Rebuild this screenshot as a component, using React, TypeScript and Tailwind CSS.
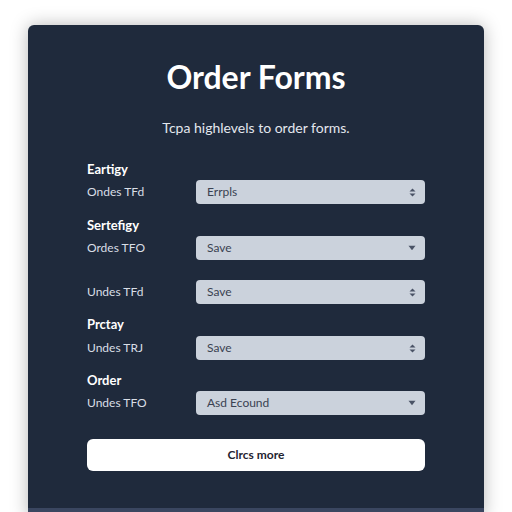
const rows: (
  | { kind: "heading"; text: string; mt: string }
  | { kind: "row"; label: string; value: string; icon: "updown" | "down"; mt: string }
)[] = [
  { kind: "heading", text: "Eartigy", mt: "mt-0" },
  { kind: "row", label: "Ondes TFd", value: "Errpls", icon: "updown", mt: "mt-[3px]" },
  { kind: "heading", text: "Sertefigy", mt: "mt-[13px]" },
  { kind: "row", label: "Ordes TFO", value: "Save", icon: "down", mt: "mt-[3px]" },
  { kind: "row", label: "Undes TFd", value: "Save", icon: "updown", mt: "mt-[20px]" },
  { kind: "heading", text: "Prctay", mt: "mt-[12px]" },
  { kind: "row", label: "Undes TRJ", value: "Save", icon: "updown", mt: "mt-[4px]" },
  { kind: "heading", text: "Order", mt: "mt-[12px]" },
  { kind: "row", label: "Undes TFO", value: "Asd Ecound", icon: "down", mt: "mt-[3px]" },
];

function SelectIcon({ icon }: { icon: "updown" | "down" }) {
  if (icon === "down") {
    return (
      <svg width="8" height="6" viewBox="0 0 8 6" className="text-[#4a5366]">
        <path d="M0.5 0.8 L7.5 0.8 L4 5.2 Z" fill="currentColor" />
      </svg>
    );
  }
  return (
    <svg width="7" height="9" viewBox="0 0 7 9" className="text-[#4a5366]">
      <path d="M3.5 0.5 L6.5 3.6 L0.5 3.6 Z" fill="currentColor" />
      <path d="M3.5 8.5 L6.5 5.4 L0.5 5.4 Z" fill="currentColor" />
    </svg>
  );
}

export default function App() {
  return (
    <div className="min-h-[512px] bg-white font-['Lato',sans-serif]">
      <div className="mx-auto mt-[25px] w-[456px] overflow-hidden rounded-t-md bg-[#1f2a3c] shadow-[0_0_18px_rgba(0,0,0,0.28)]">
        <div className="px-[59px] pb-[37px] pt-[34px]">
          <h1 className="text-center text-[32px] font-bold leading-[36px] text-white">
            Order Forms
          </h1>
          <p className="mt-[24px] text-center text-[14px] leading-[18px] text-[#e3e7ee]">
            Tcpa highlevels to order forms.
          </p>

          <div className="mt-[24px] flex flex-col">
            {rows.map((r, i) =>
              r.kind === "heading" ? (
                <div
                  key={i}
                  className={`${r.mt} text-[13px] font-bold leading-[16px] text-white`}
                >
                  {r.text}
                </div>
              ) : (
                <div key={i} className={`${r.mt} flex items-center`}>
                  <span className="w-[109px] text-[12px] text-[#d9dee6]">
                    {r.label}
                  </span>
                  <div className="flex h-[24px] flex-1 items-center justify-between rounded-[4px] bg-[#cbd2dc] pl-[11px] pr-[9px]">
                    <span className="text-[12px] text-[#3a4252]">{r.value}</span>
                    <SelectIcon icon={r.icon} />
                  </div>
                </div>
              ),
            )}
          </div>

          <button className="mt-[24px] flex h-[32px] w-full items-center justify-center rounded-[6px] bg-white text-[12px] font-bold text-[#1f2330]">
            Clrcs more
          </button>
        </div>
        <div className="h-[10px] bg-[#3a4660]" />
      </div>
    </div>
  );
}
